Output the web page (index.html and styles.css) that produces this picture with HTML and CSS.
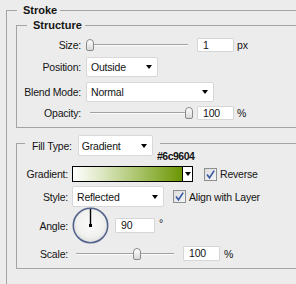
FILE: index.html
```html
<!doctype html>
<html lang="en">
<head>
  <meta charset="utf-8">
  <title>Stroke</title>
  <link rel="stylesheet" href="styles.css">
</head>

<body class="app">
  <fieldset class="group group-outer">
    <legend class="legend">Stroke</legend>

    <fieldset class="group group-structure">
      <legend class="legend">Structure</legend>

      <div class="row row-size">
        <div class="label">Size:</div>
        <div class="slider">
          <div class="track"></div>
          <div class="thumb" style="left: 0px"></div>
        </div>
        <div class="num">1</div>
        <div class="unit">px</div>
      </div>

      <div class="row row-position">
        <div class="label">Position:</div>
        <div class="select select-position">Outside<span class="arrow"></span></div>
      </div>

      <div class="row row-blend">
        <div class="label">Blend Mode:</div>
        <div class="select select-blend">Normal<span class="arrow"></span></div>
      </div>

      <div class="row row-opacity">
        <div class="label">Opacity:</div>
        <div class="slider">
          <div class="track"></div>
          <div class="thumb" style="left: 99px"></div>
        </div>
        <div class="num">100</div>
        <div class="unit">%</div>
      </div>
    </fieldset>

    <fieldset class="group group-fill">
      <legend class="legend-fill">
        <span class="fill-label">Fill Type:</span>
        <span class="select select-filltype">Gradient<span class="arrow"></span></span>
      </legend>

      <div class="hex">#6c9604</div>

      <div class="row row-gradient">
        <div class="label label-fill">Gradient:</div>
        <div class="gradient">
          <div class="gradient-fill"></div>
          <div class="gradient-arrow"><span class="arrow"></span></div>
        </div>
        <svg class="check check-reverse" width="13" height="13" viewBox="0 0 13 13">
          <defs>
            <linearGradient id="cb" x1="0" y1="0" x2="1" y2="1">
              <stop offset="0" stop-color="#dcdcdc"/>
              <stop offset="1" stop-color="#f6f6f6"/>
            </linearGradient>
          </defs>
          <rect x="0.5" y="0.5" width="12" height="12" fill="url(#cb)" stroke="#8e8f8f"/>
          <path d="M3 6.5 L5.5 9.8 L10.2 2.6" fill="none" stroke="#3f5ea8" stroke-width="1.7"/>
        </svg>
        <div class="check-text">Reverse</div>
      </div>

      <div class="row row-style">
        <div class="label label-fill">Style:</div>
        <div class="select select-style">Reflected<span class="arrow"></span></div>
        <svg class="check check-align" width="13" height="13" viewBox="0 0 13 13">
          <rect x="0.5" y="0.5" width="12" height="12" fill="url(#cb)" stroke="#8e8f8f"/>
          <path d="M3 6.5 L5.5 9.8 L10.2 2.6" fill="none" stroke="#3f5ea8" stroke-width="1.7"/>
        </svg>
        <div class="check-text">Align with Layer</div>
      </div>

      <div class="row row-angle">
        <div class="label label-fill">Angle:</div>
        <svg class="dial" width="37" height="37" viewBox="0 0 37 37">
          <defs>
            <radialGradient id="dialbg" cx="0.5" cy="0.45" r="0.55">
              <stop offset="0" stop-color="#fbfbfb"/>
              <stop offset="0.7" stop-color="#f1f1f0"/>
              <stop offset="1" stop-color="#dedede"/>
            </radialGradient>
          </defs>
          <circle cx="18.5" cy="18.5" r="17.2" fill="url(#dialbg)" stroke="#54648c" stroke-width="1.6"/>
          <line x1="18.5" y1="18.5" x2="18.5" y2="2" stroke="#000" stroke-width="1.4"/>
          <rect x="17" y="17" width="3" height="3" fill="#000"/>
        </svg>
        <div class="num num-angle">90</div>
        <div class="unit unit-deg">°</div>
      </div>

      <div class="row row-scale">
        <div class="label label-fill">Scale:</div>
        <div class="slider">
          <div class="track"></div>
          <div class="thumb" style="left: 61px"></div>
        </div>
        <div class="num num-scale">100</div>
        <div class="unit unit-scale">%</div>
      </div>
    </fieldset>
  </fieldset>
</body>
</html>
```

FILE: styles.css
```css
html {
  overflow: hidden;
}

.app {
  width: 296px;
  height: 284px;
  margin: 0;
  padding: 0 0 0 6px;
  box-sizing: border-box;
  overflow: hidden;

  background: #ececec;
  color: #141414;
  font-family: "Liberation Sans", Arial, sans-serif;
  font-size: 10.5px;
  letter-spacing: -0.2px;
}

.group {
  margin: 0;
  padding: 0;
  min-width: 0;
  border: 1px solid #a4a4a4;
}

/* the boxes run on past the right and bottom edges of the dialog */
.group-outer {
  margin-top: 4px;
  width: 292px;
  height: 282px;
  box-sizing: border-box;
  border-right-color: transparent;
  border-bottom-color: transparent;
}

.legend {
  margin-left: 10px;
  padding: 0 3px 0 6px;

  font-weight: bold;
  font-size: 11px;
  line-height: 13px;
  letter-spacing: 0;
}

.group-structure {
  margin: 2px -2px 0 9px;
  padding: 5px 0 6px;
  border-right-color: transparent;
}

.group-fill {
  margin: 2px -2px 0 9px;
  padding: 0 0 7px;
  border-right-color: transparent;
}

.legend-fill {
  display: flex;
  align-items: center;
  margin-left: 8px;
  padding: 5px 7px 0 7px;
}

.fill-label {
  margin-right: 6px;
}

/* rows */

.row {
  display: flex;
  align-items: center;
}

.label {
  flex: none;
  width: 64px;
  margin-right: 5px;
  text-align: right;
}

.label-fill {
  width: 51px;
  margin-right: 4px;
}

.row-size     { height: 16px; }
.row-position { height: 20px; margin-top: 4px; }
.row-blend    { height: 20px; margin-top: 5px; }
.row-opacity  { height: 16px; margin-top: 3px; }

.row-gradient { height: 16px; margin-top: 4px; }
.row-style    { height: 21px; margin-top: 4px; }
.row-angle    { height: 37px; }
.row-scale    { height: 15px; margin-top: 2px; }

/* controls */

.slider {
  position: relative;
  flex: none;
  width: 107px;
  height: 100%;
}

.track {
  position: absolute;
  left: 4px;
  right: 5px;
  top: calc(50% - 1px);
  height: 0;
  border-top: 1px solid #a2a2a2;
  border-bottom: 1px solid #fbfbfb;
}

.thumb {
  position: absolute;
  top: calc(50% - 6px);
  width: 8px;
  height: 12px;
  box-sizing: border-box;

  border: 1px solid #8a8a8a;
  border-radius: 4px 4px 2px 2px;
  background: linear-gradient(#ffffff, #d8d8d8);
}

.num {
  flex: none;
  width: 37px;
  height: 14px;
  box-sizing: border-box;
  padding-left: 5px;
  margin-left: 4px;

  background: #fff;
  border: 1px solid #d6d6d6;
  border-radius: 1px;
  line-height: 12px;
}

.num-angle {
  width: 40px;
  height: 15px;
  margin-left: 6px;
  line-height: 13px;
}

.num-scale {
  height: 15px;
  line-height: 13px;
}

.unit {
  margin-left: 3px;
}

.unit-deg {
  margin-left: 4px;
  margin-top: -6px;
}

.unit-scale {
  margin-left: 4px;
}

.select {
  display: flex;
  align-items: center;
  justify-content: space-between;
  flex: none;
  height: 20px;
  box-sizing: border-box;
  padding: 0 5px 0 4px;

  background: #fff;
  border: 1px solid #d8d8d8;
  border-radius: 2px;
}

.select-position { width: 72px; }
.select-blend    { width: 128px; }
.select-filltype { width: 75px; height: 21px; padding-left: 3px; }
.select-style    { width: 92px; height: 21px; }

.arrow {
  width: 0;
  height: 0;
  border-left: 3.5px solid transparent;
  border-right: 3.5px solid transparent;
  border-top: 4px solid #000;
}

.hex {
  margin: -6px 0 0 140px;
  font-weight: bold;
  font-size: 10.5px;
  line-height: 12px;
  letter-spacing: -0.5px;
}

.gradient {
  display: flex;
  flex: none;
  width: 121px;
  height: 16px;
  box-sizing: border-box;
  border: 1px solid #000;
}

.gradient-fill {
  flex: 1;
  background: linear-gradient(to right, #ffffff 0%, #dfe8c6 25%, #a9c46a 60%, #6c9604 100%);
}

.gradient-arrow {
  display: flex;
  align-items: center;
  justify-content: center;
  width: 9px;
  border-left: 1px solid #000;
  background: #fff;
}

.check {
  flex: none;
}

.check-reverse {
  margin-left: 11px;
}

.check-align {
  margin-left: 9px;
}

.check-text {
  margin-left: 3px;
  white-space: nowrap;
}

.dial {
  flex: none;
}
```
